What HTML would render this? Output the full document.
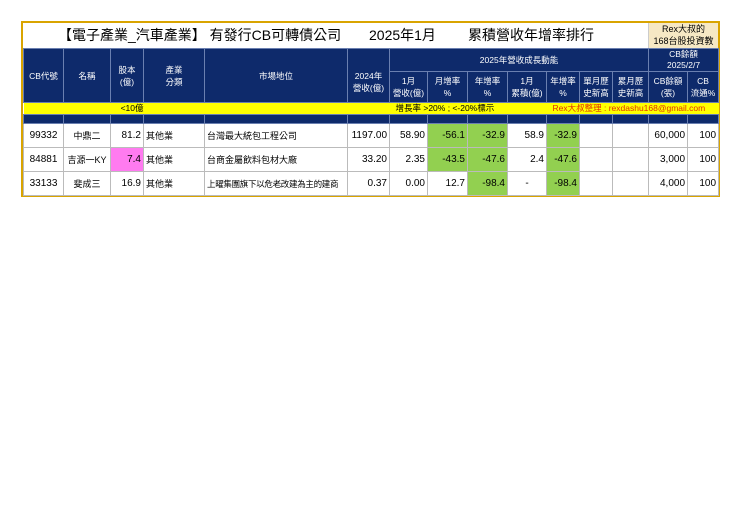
<!DOCTYPE html>
<html><head><meta charset="utf-8"><style>
body{margin:0;background:#fff;width:740px;height:523px;position:relative;font-family:"Liberation Sans","Noto Sans CJK TC",sans-serif;}
.frame{position:absolute;left:21px;top:21px;width:699px;height:176px;border:2px solid #d9a400;box-sizing:border-box;}
.title{position:absolute;left:23px;top:23px;width:625px;height:25px;font-size:14px;line-height:25px;color:#000;}
.rex{position:absolute;left:648px;top:23px;width:70px;height:25px;background:#f6e8c4;font-size:9px;line-height:12px;text-align:center;border-left:1px solid #ccc;box-sizing:border-box;}
table{position:absolute;left:23px;top:48px;width:695px;border-collapse:collapse;table-layout:fixed;}
td{border:1px solid #bbb;padding:0 2px;font-size:10px;box-sizing:border-box;white-space:nowrap;overflow:hidden;vertical-align:middle;}
.h td{background:#0e2a6b;color:#fff;text-align:center;font-size:8.5px;line-height:12px;border-color:#6a7fb0;padding:0;}
.y td{background:#ffff00;height:11px;font-size:8.5px;line-height:11px;border:none;padding:0;}
.n td{background:#0e2a6b;height:9px;border-color:#6a7fb0;}
.d td{height:24px;line-height:22px;text-align:right;}
.c{text-align:center!important}.l{text-align:left!important}
.s{font-size:9px!important}
.g{background:#92d050}.p{background:#ff7bf0}
</style></head><body>
<div class="frame"></div>
<div class="title"><span style="position:absolute;left:35px">【電子產業_汽車產業】 有發行CB可轉債公司</span><span style="position:absolute;left:346px">2025年1月</span><span style="position:absolute;left:445px">累積營收年增率排行</span></div>
<div class="rex">Rex大叔的<br>168台股投資教室</div>
<table>
<colgroup><col style="width:40px"><col style="width:47px"><col style="width:33px"><col style="width:61px"><col style="width:143px"><col style="width:42px"><col style="width:38px"><col style="width:40px"><col style="width:40px"><col style="width:39px"><col style="width:33px"><col style="width:33px"><col style="width:36px"><col style="width:39px"><col style="width:31px"></colgroup>
<tr class="h"><td rowspan="2" style="height:53px">CB代號</td><td rowspan="2">名稱</td><td rowspan="2">股本<br>(億)</td><td rowspan="2">產業<br>分類</td><td rowspan="2">市場地位</td><td rowspan="2" style="padding-top:12px">2024年<br>營收(億)</td><td colspan="7" style="height:22px">2025年營收成長動能</td><td colspan="2" style="line-height:11px">CB餘額<br>2025/2/7</td></tr>
<tr class="h"><td style="height:31px">1月<br>營收(億)</td><td>月增率<br>%</td><td>年增率<br>%</td><td>1月<br>累積(億)</td><td>年增率<br>%</td><td>單月歷<br>史新高</td><td>累月歷<br>史新高</td><td>CB餘額<br>(張)</td><td>CB<br>流通%</td></tr>
<tr class="y"><td colspan="3" style="text-align:right">&lt;10億</td><td colspan="3"></td><td colspan="4" style="padding-left:6px">增長率 &gt;20% ; &lt;-20%標示</td><td colspan="5" style="color:#e03000;font-size:8.5px;padding-left:6px">Rex大叔整理 : rexdashu168@gmail.com</td></tr>
<tr class="n"><td></td><td></td><td></td><td></td><td></td><td></td><td></td><td></td><td></td><td></td><td></td><td></td><td></td><td></td><td></td></tr>
<tr class="d"><td class="c">99332</td><td class="c s">中鼎二</td><td>81.2</td><td class="l s">其他業</td><td class="l s">台灣最大統包工程公司</td><td>1197.00</td><td>58.90</td><td class="g">-56.1</td><td class="g">-32.9</td><td>58.9</td><td class="g">-32.9</td><td></td><td></td><td>60,000</td><td>100</td></tr>
<tr class="d"><td class="c">84881</td><td class="c s">吉源一KY</td><td class="p">7.4</td><td class="l s">其他業</td><td class="l s">台商金屬飲料包材大廠</td><td>33.20</td><td>2.35</td><td class="g">-43.5</td><td class="g">-47.6</td><td>2.4</td><td class="g">-47.6</td><td></td><td></td><td>3,000</td><td>100</td></tr>
<tr class="d"><td class="c">33133</td><td class="c s">斐成三</td><td>16.9</td><td class="l s">其他業</td><td class="l s" style="font-size:8.5px!important;letter-spacing:-0.3px">上曜集團旗下以危老改建為主的建商</td><td>0.37</td><td>0.00</td><td>12.7</td><td class="g">-98.4</td><td class="c">-</td><td class="g">-98.4</td><td></td><td></td><td>4,000</td><td>100</td></tr>
</table>
</body></html>
